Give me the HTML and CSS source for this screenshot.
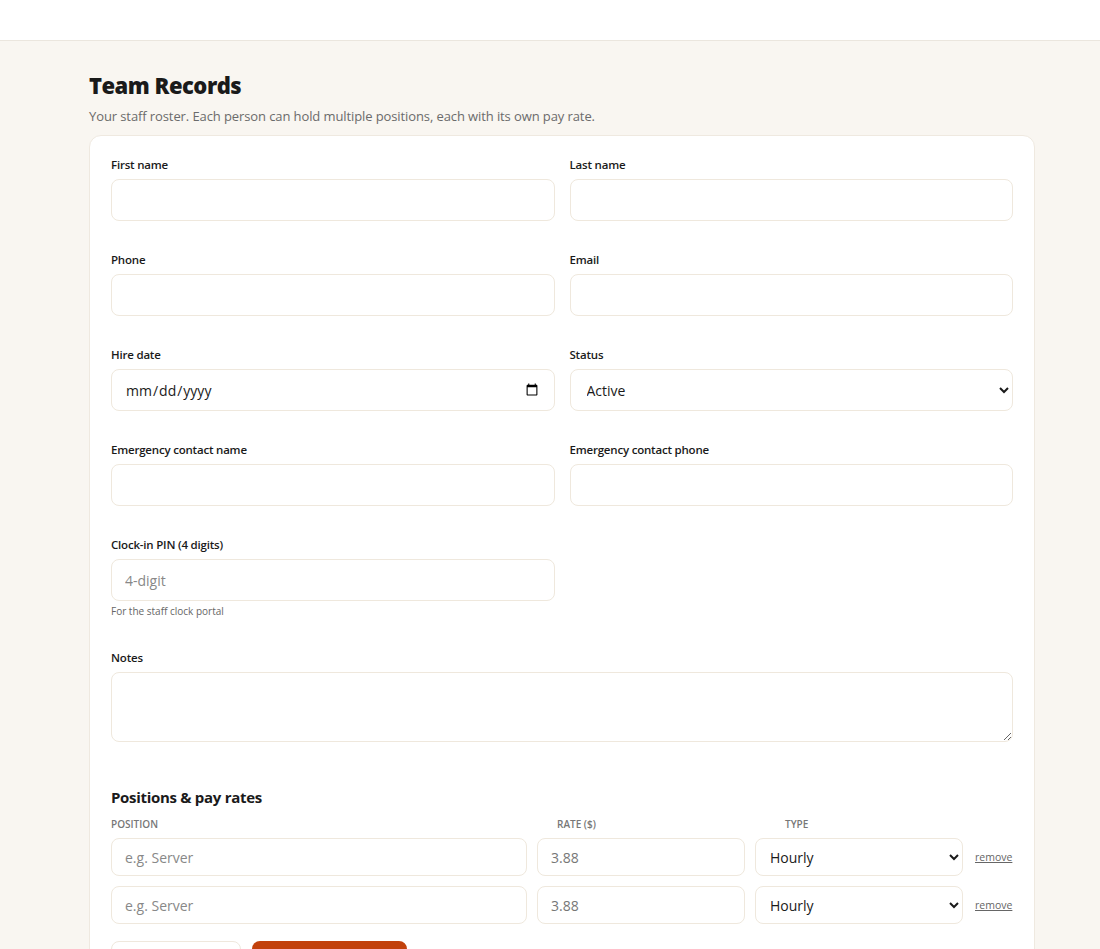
FILE: index.html
```html
<!DOCTYPE html>
<html lang="en">
<head>
    <meta charset="UTF-8">
    <meta name="viewport" content="width=device-width, initial-scale=1.0">
    <title>Team Records</title>
    <link rel="stylesheet" href="styles.css">
</head>
<body>
    <header class="topbar"></header>

    <main class="page">
        <h1>Team Records</h1>
        <p class="subtitle">Your staff roster. Each person can hold multiple positions, each with its own pay rate.</p>

        <form class="card">
            <div class="grid">
                <div class="field">
                    <label>First name</label>
                    <input type="text">
                </div>
                <div class="field">
                    <label>Last name</label>
                    <input type="text">
                </div>
                <div class="field">
                    <label>Phone</label>
                    <input type="tel">
                </div>
                <div class="field">
                    <label>Email</label>
                    <input type="email">
                </div>
                <div class="field">
                    <label>Hire date</label>
                    <input type="date">
                </div>
                <div class="field">
                    <label>Status</label>
                    <select>
                        <option>Active</option>
                        <option>Inactive</option>
                    </select>
                </div>
                <div class="field">
                    <label>Emergency contact name</label>
                    <input type="text">
                </div>
                <div class="field">
                    <label>Emergency contact phone</label>
                    <input type="tel">
                </div>
                <div class="field">
                    <label>Clock-in PIN (4 digits)</label>
                    <input type="text" placeholder="4-digit">
                    <small class="hint">For the staff clock portal</small>
                </div>
                <div></div>
                <div class="field full">
                    <label>Notes</label>
                    <textarea></textarea>
                </div>
            </div>

            <h2>Positions &amp; pay rates</h2>
            <div class="pos-head">
                <span>Position</span>
                <span class="rate-h">Rate ($)</span>
                <span class="type-h">Type</span>
                <span></span>
            </div>
            <div class="pos-row">
                <input type="text" placeholder="e.g. Server">
                <input type="text" class="rate" value="3.88">
                <select>
                    <option>Hourly</option>
                    <option>Salary</option>
                </select>
                <a href="#" class="remove">remove</a>
            </div>
            <div class="pos-row">
                <input type="text" placeholder="e.g. Server">
                <input type="text" class="rate" value="3.88">
                <select>
                    <option>Hourly</option>
                    <option>Salary</option>
                </select>
                <a href="#" class="remove">remove</a>
            </div>

            <div class="actions">
                <button type="button" class="btn-light">+ Add position</button>
                <button type="submit" class="btn-primary">Save team member</button>
            </div>
        </form>
    </main>
</body>
</html>
```

FILE: styles.css
```css
body {
    margin: 0;
    font-family: "Open Sans", "Noto Sans", sans-serif;
    background-color: #f9f6f1;
    color: #1a1a1a;
}
.topbar {
    height: 40px;
    background: white;
    border-bottom: 1px solid #ebe6de;
}
.page {
    width: 946px;
    padding: 30px 0 40px 89px;
}
h1 {
    margin: 0 0 8px;
    font-size: 22px;
    font-weight: 800;
    letter-spacing: -0.5px;
    line-height: 28px;
}
.subtitle {
    margin: 0 0 10px;
    font-size: 13px;
    color: #6b6b6b;
    line-height: 18px;
    letter-spacing: -0.1px;
}
.card {
    background: white;
    border: 1px solid #efe9e0;
    border-radius: 12px;
    padding: 21px 21px 30px;
}
.grid {
    display: grid;
    grid-template-columns: 1fr 1fr;
    column-gap: 15px;
    row-gap: 31px;
}
.field {
    display: flex;
    flex-direction: column;
}
.field.full {
    grid-column: 1 / 3;
    margin-top: 1px;
}
label {
    font-size: 11.5px;
    font-weight: 600;
    line-height: 16px;
    margin-bottom: 6px;
    letter-spacing: -0.2px;
}
input, select, textarea {
    box-sizing: border-box;
    height: 42px;
    padding: 0 13px;
    border: 1px solid #efe8dd;
    border-radius: 8px;
    background: white;
    font-family: "Open Sans", "Noto Sans", sans-serif;
    font-size: 14px;
    color: #1a1a1a;
}
input::placeholder {
    color: #888;
}
select {
    padding-left: 12px;
}
textarea {
    height: 70px;
    padding: 10px 13px;
    resize: vertical;
}
.hint {
    margin-top: 3px;
    font-size: 10px;
    color: #666;
    line-height: 14px;
}
h2 {
    margin: 45px 0 10px;
    font-size: 15px;
    font-weight: 700;
    line-height: 20px;
    letter-spacing: -0.3px;
}
.pos-head, .pos-row {
    display: grid;
    grid-template-columns: 2fr 1fr 1fr 40px;
    column-gap: 10px;
    align-items: center;
}
.pos-head {
    margin-bottom: 7px;
}
.pos-head span {
    font-size: 10px;
    font-weight: 600;
    text-transform: uppercase;
    color: #777;
    line-height: 14px;
}
.pos-head .rate-h {
    padding-left: 20px;
}
.pos-head .type-h {
    padding-left: 30px;
}
.pos-row {
    margin-bottom: 10px;
}
.pos-row input, .pos-row select {
    height: 38px;
    width: 100%;
}
.pos-row select {
    padding-left: 10px;
}
.pos-row .rate {
    color: #777;
}
.remove {
    font-size: 10.5px;
    color: #666;
    padding-left: 2px;
}
.actions {
    display: flex;
    gap: 11px;
    margin-top: 17px;
}
.actions button {
    height: 38px;
    border-radius: 8px;
    font-family: "Open Sans", "Noto Sans", sans-serif;
    font-size: 13px;
    font-weight: 600;
    cursor: pointer;
}
.btn-light {
    width: 130px;
    background: white;
    border: 1px solid #efe8dd;
    color: #333;
}
.btn-primary {
    width: 155px;
    background: #c2410c;
    border: none;
    color: white;
}
```
